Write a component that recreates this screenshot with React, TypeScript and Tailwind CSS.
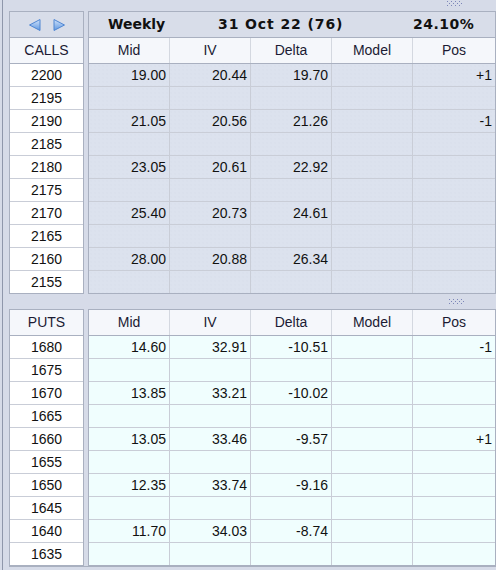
type Row = { k: string; mid?: string; iv?: string; d?: string; pos?: string };

const calls: Row[] = [
  { k: "2200", mid: "19.00", iv: "20.44", d: "19.70", pos: "+1" },
  { k: "2195" },
  { k: "2190", mid: "21.05", iv: "20.56", d: "21.26", pos: "-1" },
  { k: "2185" },
  { k: "2180", mid: "23.05", iv: "20.61", d: "22.92" },
  { k: "2175" },
  { k: "2170", mid: "25.40", iv: "20.73", d: "24.61" },
  { k: "2165" },
  { k: "2160", mid: "28.00", iv: "20.88", d: "26.34" },
  { k: "2155" },
];

const puts: Row[] = [
  { k: "1680", mid: "14.60", iv: "32.91", d: "-10.51", pos: "-1" },
  { k: "1675" },
  { k: "1670", mid: "13.85", iv: "33.21", d: "-10.02" },
  { k: "1665" },
  { k: "1660", mid: "13.05", iv: "33.46", d: "-9.57", pos: "+1" },
  { k: "1655" },
  { k: "1650", mid: "12.35", iv: "33.74", d: "-9.16" },
  { k: "1645" },
  { k: "1640", mid: "11.70", iv: "34.03", d: "-8.74" },
  { k: "1635" },
];

const cols = ["Mid", "IV", "Delta", "Model", "Pos"];

function Grip() {
  return (
    <svg width="16" height="5" viewBox="0 0 16 5">
      {[0, 1, 2].map((r) =>
        [0, 1, 2, 3, 4, 5, 6, 7].map((c) =>
          (r + c) % 2 === 0 ? (
            <rect key={`${r}-${c}`} x={c * 2} y={r * 2} width="1" height="1" fill="#7d86b8" />
          ) : null
        )
      )}
    </svg>
  );
}

function Arrow({ dir }: { dir: "l" | "r" }) {
  const pts = dir === "l" ? "11,0.5 11,11.5 0.5,6" : "1,0.5 1,11.5 11.5,6";
  return (
    <svg width="12" height="12" viewBox="0 0 12 12">
      <defs>
        <linearGradient id={`g${dir}`} x1="0" y1="0" x2="0" y2="1">
          <stop offset="0" stopColor="#cfe2fb" />
          <stop offset="1" stopColor="#5f97e0" />
        </linearGradient>
      </defs>
      <polygon points={pts} fill={`url(#g${dir})`} stroke="#4f86d2" strokeWidth="1" strokeLinejoin="round" />
    </svg>
  );
}

function Panel({ label, rows, top, dataBg }: { label: string; rows: Row[]; top?: boolean; dataBg: string }) {
  return (
    <div className="flex">
      <div className="w-[75px] border-l border-r border-[#a9b0c0] flex flex-col">
        {top && (
          <div className="h-[27px] border-t border-b border-[#a9b0c0] bg-[#d8dde9] flex items-center justify-center gap-[12px]">
            <Arrow dir="l" />
            <Arrow dir="r" />
          </div>
        )}
        <div className={`${top ? "h-[26px]" : "h-[27px] border-t"} border-b border-[#a9b0c0] bg-[#f5f7fb] flex items-center justify-center text-[14px] text-[#1b1b33]`}>
          {label}
        </div>
        {rows.map((r) => (
          <div key={r.k} className="h-[23px] border-b border-[#c9cdd7] last:border-[#a9b0c0] bg-white flex items-center justify-center pt-[1px] text-[14px] text-[#111]">
            {r.k}
          </div>
        ))}
      </div>
      <div className="w-[4px]" />
      <div className="w-[408px] border-l border-r border-[#a9b0c0] flex flex-col">
        {top && (
          <div className="h-[27px] border-t border-b border-[#a9b0c0] bg-[#d8dde9] flex items-center font-['DejaVu_Sans'] font-bold text-[14px] text-[#111]">
            <span className="w-[129px] pl-[19px]">Weekly</span>
            <span className="w-[195px] tracking-[0.9px]">31 Oct 22 (76)</span>
            <span className="tracking-[0.5px]">24.10%</span>
          </div>
        )}
        <div className={`${top ? "h-[26px]" : "h-[27px] border-t"} border-b border-[#a9b0c0] bg-[#f5f7fb] flex text-[14px] text-[#1b1b33]`}>
          {cols.map((c, i) => (
            <div key={c} className={`${i === 4 ? "w-[82px]" : "w-[81px] border-r border-[#d4d8e0]"} flex items-center justify-center`}>
              {c}
            </div>
          ))}
        </div>
        {rows.map((r) => (
          <div key={r.k} className={`h-[23px] border-b border-[#c9cdd7] last:border-[#a9b0c0] ${dataBg} flex text-[14px] text-[#111]`}>
            {[r.mid, r.iv, r.d, "", r.pos].map((v, i) => (
              <div key={i} className={`${i === 4 ? "w-[82px]" : "w-[81px] border-r border-[#c9cdd7]"} flex items-center justify-end pr-[3px] pt-[1px]`}>
                {v}
              </div>
            ))}
          </div>
        ))}
      </div>
    </div>
  );
}

export default function App() {
  return (
    <div className="w-[496px] h-[570px] bg-[#d6dbe8] font-['Liberation_Sans',sans-serif] pl-[2px] overflow-hidden">
      <div className="h-full border-l border-[#8f97ab] pl-[6px] flex flex-col">
        <div className="h-[11px] flex justify-end pr-[33px] pt-[1px]">
          <Grip />
        </div>
        <Panel
          label="CALLS"
          rows={calls}
          top
          dataBg="bg-[#dce2ee] bg-[radial-gradient(circle,#d6dcea_0.5px,transparent_0.8px)] bg-[length:4px_4px]"
        />
        <div className="h-[15px] flex justify-end items-center pr-[31px]">
          <Grip />
        </div>
        <div className="border-b border-[#a9b0c0] w-fit">
          <Panel label="PUTS" rows={puts} dataBg="bg-[#f0fefe]" />
        </div>
      </div>
    </div>
  );
}
